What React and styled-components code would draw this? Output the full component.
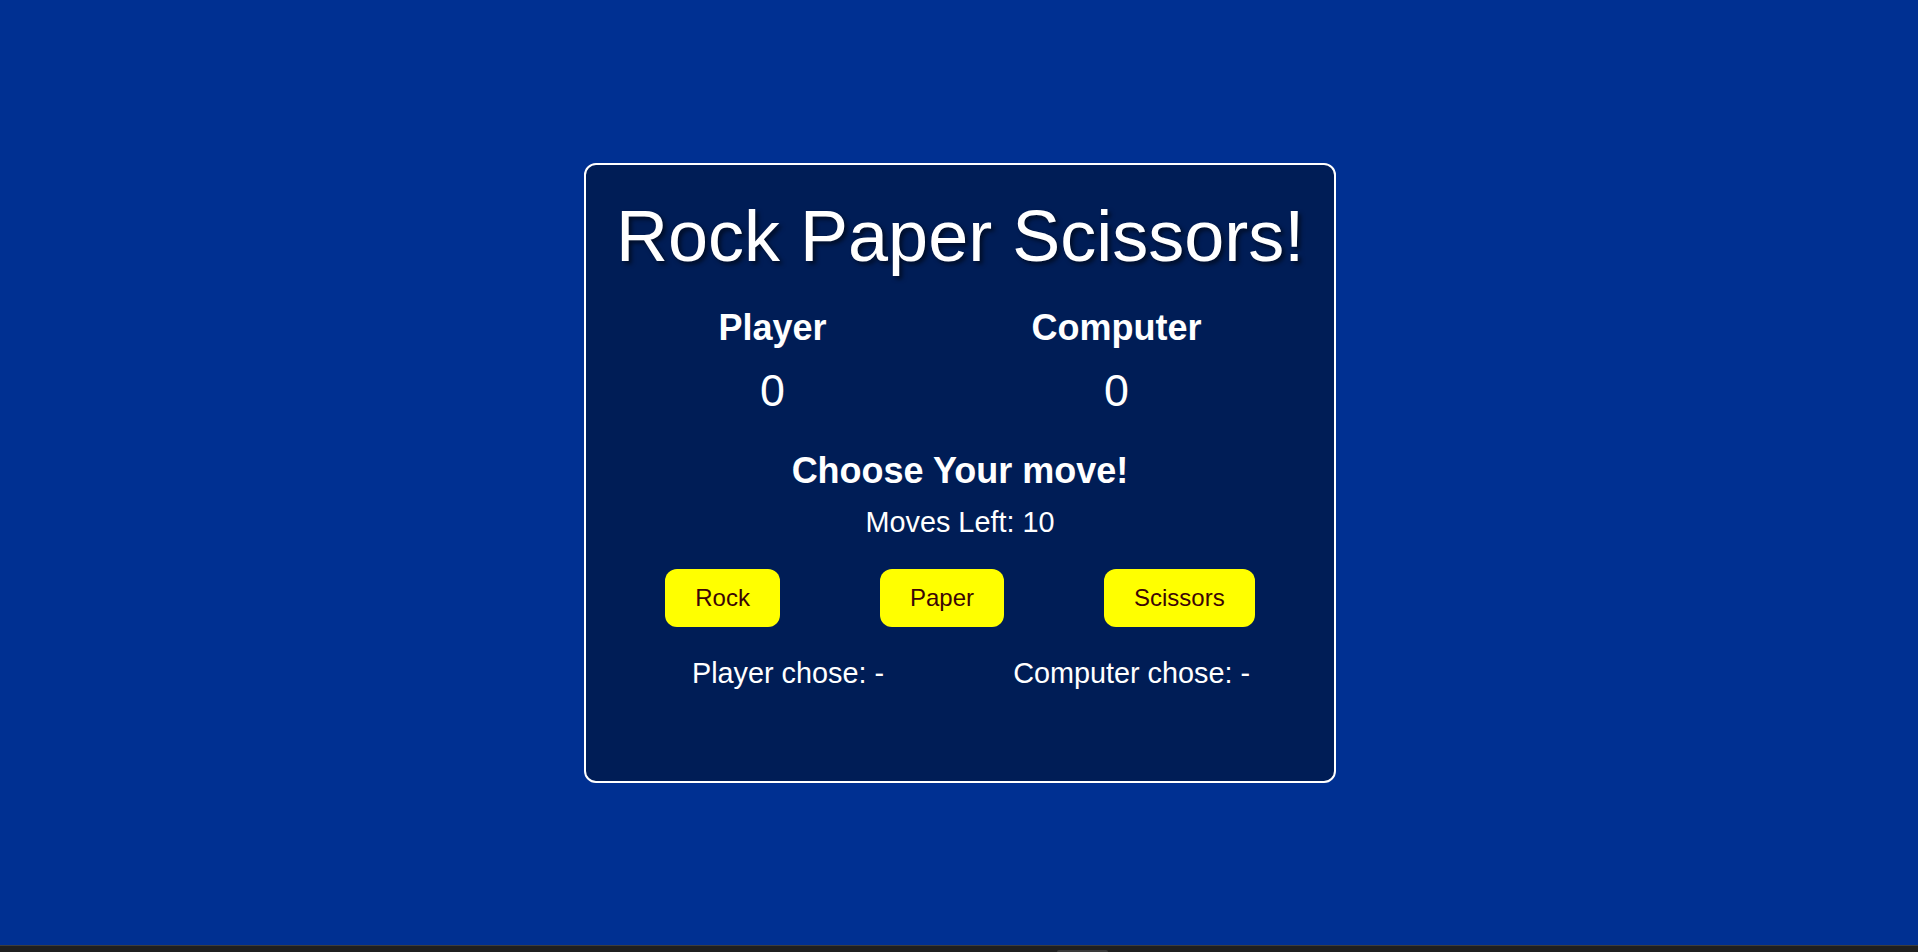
import styled, { createGlobalStyle } from "styled-components";

const GlobalStyle = createGlobalStyle`
    html, body {
        margin: 0;
        padding: 0;
        background: #003092;
        font-family: "Liberation Sans", Arial, sans-serif;
    }
`;

const Page = styled.div`
    display: flex;
    flex-direction: column;
    height: 952px;
    overflow: hidden;
`;

const Stage = styled.main`
    flex: 1;
    display: flex;
    align-items: center;
    justify-content: center;
    padding-left: 2px;
`;

const Card = styled.div`
    width: 688px;
    background: #001d56;
    border: 2px solid #ffffff;
    border-radius: 12px;
    padding: 30px;
    color: #ffffff;
    text-align: center;
`;

const Title = styled.h1`
    margin: 0;
    font-size: 72px;
    font-weight: 400;
    line-height: 83px;
    white-space: nowrap;
    text-shadow: 3px 3px 4px rgba(0, 0, 0, 0.55);
`;

const ScoreRow = styled.div`
    display: flex;
    justify-content: space-around;
    margin-top: 29px;
`;

const Side = styled.div`
    display: flex;
    flex-direction: column;
    align-items: center;
`;

const Heading = styled.h2`
    margin: 0;
    font-size: 36px;
    font-weight: 700;
    line-height: 41px;
`;

const Score = styled.div`
    margin-top: 16px;
    font-size: 44.8px;
    line-height: 52px;
`;

const Prompt = styled.h2`
    margin: 34px 0 0;
    font-size: 36px;
    font-weight: 700;
    line-height: 41px;
`;

const Info = styled.p`
    margin: ${(p) => p.$top || 0}px 0 0;
    font-size: 28.8px;
    line-height: 33px;
`;

const Buttons = styled.div`
    display: flex;
    justify-content: center;
    gap: 100px;
    margin-top: 30px;
`;

const MoveButton = styled.button`
    background: #ffff00;
    color: #3b0505;
    border: none;
    border-radius: 12px;
    padding: 15px 30px;
    font-family: "Liberation Sans", Arial, sans-serif;
    font-size: 24px;
    line-height: 28px;
    cursor: pointer;
`;

const ChoiceRow = styled.div`
    display: flex;
    justify-content: space-between;
    margin-top: 30px;
    padding: 0 54px 61px 76px;
`;

const BottomBar = styled.footer`
    height: 6px;
    border-top: 1px solid #3c3c3c;
    background: #1f1f1f;
    position: relative;
`;

const Thumb = styled.span`
    position: absolute;
    left: 1057px;
    bottom: 0;
    width: 51px;
    height: 2px;
    border-radius: 2px 2px 0 0;
    background: #3a3a3a;
`;

const moves = ["Rock", "Paper", "Scissors"];

const App = () => {
    return (
        <Page>
            <GlobalStyle />
            <Stage>
                <Card>
                    <Title>Rock Paper Scissors!</Title>
                    <ScoreRow>
                        <Side>
                            <Heading>Player</Heading>
                            <Score>0</Score>
                        </Side>
                        <Side>
                            <Heading>Computer</Heading>
                            <Score>0</Score>
                        </Side>
                    </ScoreRow>
                    <Prompt>Choose Your move!</Prompt>
                    <Info $top={15}>Moves Left: 10</Info>
                    <Buttons>
                        {moves.map((m) => (
                            <MoveButton key={m}>{m}</MoveButton>
                        ))}
                    </Buttons>
                    <ChoiceRow>
                        <Info>Player chose: -</Info>
                        <Info>Computer chose: -</Info>
                    </ChoiceRow>
                </Card>
            </Stage>
            <BottomBar>
                <Thumb />
            </BottomBar>
        </Page>
    );
};

export default App;
